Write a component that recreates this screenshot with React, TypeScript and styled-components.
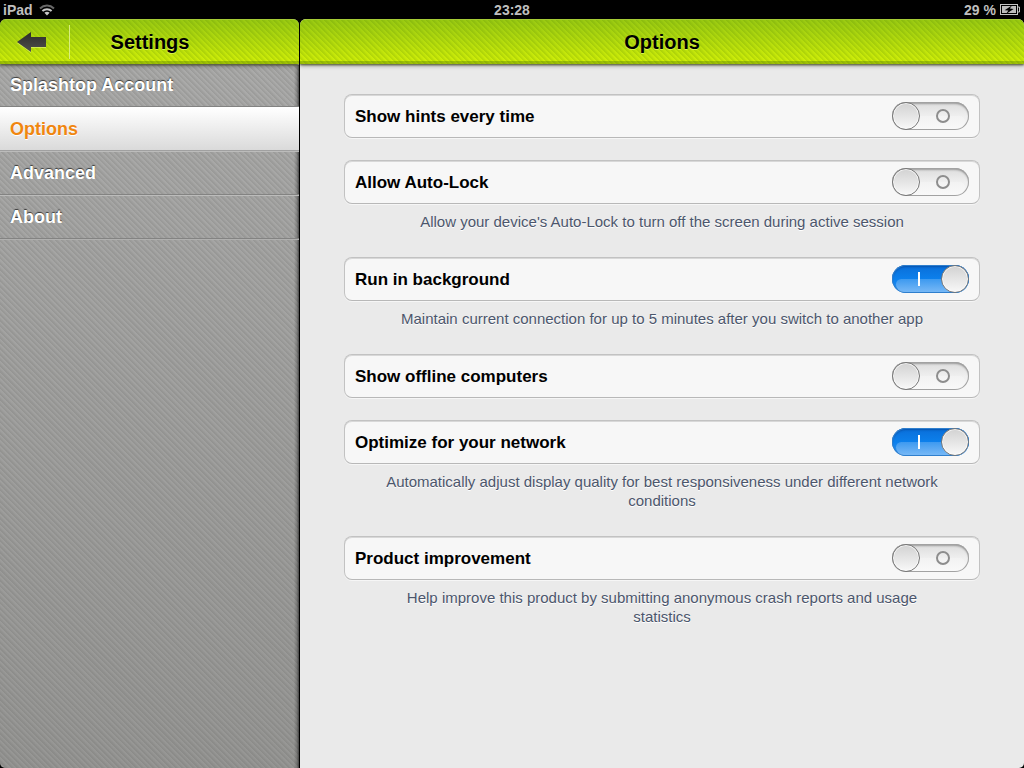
import React, { useState } from "react";
import styled, { createGlobalStyle, css } from "styled-components";

const GlobalStyle = createGlobalStyle`
  *, *::before, *::after { box-sizing: border-box; }
  body {
    margin: 0;
    background: #000;
    color: #000;
    font-family: "Liberation Sans", Helvetica, Arial, sans-serif;
  }
`;

const Screen = styled.div`
  display: flex;
  flex-direction: column;
  min-height: 100vh;
`;

const StatusBar = styled.div`
  display: grid;
  grid-template-columns: 1fr auto 1fr;
  align-items: center;
  height: 19px;
  padding: 0 3px;
  color: #bfbfbf;
  font-size: 14px;
  line-height: 18px;
  font-weight: bold;
`;

const StatusGroup = styled.div<{ $end?: boolean }>`
  display: flex;
  align-items: center;
  gap: ${(p) => (p.$end ? 4 : 6)}px;
  justify-content: ${(p) => (p.$end ? "flex-end" : "flex-start")};
`;

const SplitView = styled.div`
  display: flex;
  flex: 1;
  gap: 1px;
`;

const stripes = (color: string) =>
  css`repeating-linear-gradient(45deg, ${color} 0 1px, transparent 3px 4px)`;

const Sidebar = styled.aside`
  display: flex;
  flex-direction: column;
  flex: 0 0 299px;
  border-radius: 6px 6px 0 5px;
  overflow: hidden;
  background: ${stripes("rgba(60, 60, 56, 0.12)")}, linear-gradient(#acacab, #969694);
`;

const Content = styled.main`
  flex: 1;
  min-width: 0;
  border-radius: 6px 6px 5px 0;
  background: #eaeaea;
  overflow: hidden;
`;

const HeaderBar = styled.header`
  position: relative;
  display: flex;
  align-items: center;
  height: 45px;
  border-top: 1px solid #a5cb35;
  border-bottom: 3px solid rgba(70, 110, 0, 0.35);
  background: ${stripes("rgba(70, 120, 0, 0.16)")}, linear-gradient(#98c912, #d2f008);
  background-origin: border-box;
  box-shadow: 0 1px 2px rgba(40, 50, 0, 0.7), 0 2px 4px rgba(0, 0, 0, 0.3);
`;

const HeaderTitle = styled.h1`
  flex: 1;
  margin: 0;
  padding-top: 2px;
  text-align: center;
  font-size: 20px;
  line-height: 24px;
  font-weight: bold;
  text-shadow: 0 1px 0 rgba(235, 255, 130, 0.6);
`;

const BackButton = styled.button`
  display: flex;
  align-items: center;
  width: 70px;
  height: 34px;
  margin: 2px 0 0;
  padding: 0 0 0 17px;
  border: 0;
  border-right: 1px solid #d9ed80;
  background: none;
  cursor: pointer;
`;

const SidebarTitle = styled(HeaderTitle)`
  padding-right: 69px;
`;

const Menu = styled.nav`
  display: flex;
  flex-direction: column;
  border-bottom: 1px solid #b0b0af;
`;

const MenuLink = styled.a<{ $active?: boolean }>`
  height: 44px;
  padding: 0 10px;
  border-top: 1px solid #bcbcbb;
  border-bottom: 1px solid #838382;
  font-size: 18px;
  line-height: 42px;
  font-weight: bold;
  text-decoration: none;
  color: #fff;
  text-shadow: 0 -1px 1px rgba(0, 0, 0, 0.65);
  &:first-child {
    height: 43px;
    line-height: 40px;
  }
  ${(p) =>
    p.$active &&
    css`
      color: #f0860f;
      text-shadow: 0 1px 0 #fff;
      border-top-color: #fff;
      border-bottom-color: #a0a0a0;
      background: linear-gradient(#fff, #dadada);
    `}
`;

const SidebarBody = styled.div`
  flex: 1;
  background: linear-gradient(to left, rgba(0, 0, 0, 0.55), rgba(0, 0, 0, 0.2) 2px, transparent 5px);
`;

const OptionList = styled.div`
  padding: 30px 44px;
`;

const Option = styled.section<{ $noted: boolean }>`
  margin-bottom: ${(p) => (p.$noted ? 26 : 22)}px;
`;

const Card = styled.label`
  display: flex;
  align-items: center;
  justify-content: space-between;
  height: 44px;
  padding: 0 10px;
  border: 1px solid #c2c2c2;
  border-bottom-color: #b8b8b8;
  border-radius: 8px;
  background: #f7f7f7;
  box-shadow: inset 0 1px 0 #d8d8d8, 0 1px 0 #f6f6f6;
`;

const CardTitle = styled.span`
  padding-top: 2px;
  font-size: 17px;
  line-height: 22px;
  font-weight: bold;
`;

const Note = styled.p`
  margin: 0;
  padding: 8px 36px 0;
  text-align: center;
  font-size: 15px;
  line-height: 19px;
  color: #4c566c;
  text-shadow: 0 1px 0 #fff;
`;

const Track = styled.span<{ $on: boolean }>`
  position: relative;
  display: flex;
  align-items: center;
  flex-direction: ${(p) => (p.$on ? "row-reverse" : "row")};
  width: 77px;
  height: 28px;
  border-radius: 14px;
  overflow: hidden;
  background: ${(p) =>
    p.$on
      ? "linear-gradient(#0a6ed8, #0c80ec 50%, #2f93f2)"
      : "linear-gradient(#dcdcdc, #efefef 50%, #f6f6f6)"};
  box-shadow: ${(p) =>
    p.$on
      ? "inset 0 0 0 1px #2f7fcd, inset 0 2px 2px rgba(0, 40, 110, 0.4)"
      : "inset 0 0 0 1px #a2a2a2, inset 0 2px 2px rgba(0, 0, 0, 0.3)"};
  &::before {
    content: "";
    position: absolute;
    inset: 14px 4px 1px;
    border-radius: 8px 8px 12px 12px;
    background: linear-gradient(rgba(255, 255, 255, 0.2), rgba(255, 255, 255, 0.35));
  }
`;

const Knob = styled.span`
  position: relative;
  width: 28px;
  height: 28px;
  border: 1px solid #777;
  border-radius: 50%;
  background: linear-gradient(#d2d2d2, #f8f8f8);
  box-shadow: inset 0 0 0 1px rgba(255, 255, 255, 0.7);
`;

const MarkSlot = styled.span`
  position: relative;
  display: flex;
  flex: 1;
  justify-content: center;
`;

const OffMark = styled.span`
  width: 14px;
  height: 14px;
  margin-right: 4px;
  border: 2px solid #8d8d8d;
  border-radius: 50%;
`;

const OnMark = styled.span`
  width: 2px;
  height: 14px;
  margin-left: 5px;
  background: #fff;
`;

const SwitchInput = styled.input`
  position: absolute;
  inset: 0;
  width: 100%;
  height: 100%;
  margin: 0;
  opacity: 0;
  cursor: pointer;
`;

type OptionData = { title: string; note?: string; on: boolean };

const options: OptionData[] = [
  { title: "Show hints every time", on: false },
  {
    title: "Allow Auto-Lock",
    note: "Allow your device's Auto-Lock to turn off the screen during active session",
    on: false,
  },
  {
    title: "Run in background",
    note: "Maintain current connection for up to 5 minutes after you switch to another app",
    on: true,
  },
  { title: "Show offline computers", on: false },
  {
    title: "Optimize for your network",
    note: "Automatically adjust display quality for best responsiveness under different network conditions",
    on: true,
  },
  {
    title: "Product improvement",
    note: "Help improve this product by submitting anonymous crash reports and usage statistics",
    on: false,
  },
];

const menu = ["Splashtop Account", "Options", "Advanced", "About"];

function WifiIcon() {
  return (
    <svg width="16" height="12" viewBox="0 0 16 12" fill="none" aria-hidden="true">
      <path d="M1 4.4C5 .6 11 .6 15 4.4" stroke="#686868" strokeWidth="2" />
      <path d="M3.4 7C6 4.6 10 4.6 12.6 7" stroke="#c8c8c8" strokeWidth="2" />
      <path d="M5.4 8.7Q8 6.7 10.6 8.7L8 11.6Z" fill="#c8c8c8" />
    </svg>
  );
}

function BatteryIcon() {
  return (
    <svg width="21" height="11" viewBox="0 0 21 11" aria-hidden="true">
      <rect x=".5" y=".5" width="17" height="10" fill="none" stroke="#c4c4c4" />
      <rect x="2" y="2" width="14" height="7" fill="#bdbdbd" />
      <path d="M18 3h1.5v5H18" fill="none" stroke="#c4c4c4" />
      <path d="M12.2 1.2 4.6 6.2 8.4 6.6 6 10 13.6 5 9.8 4.5Z" fill="#000" />
    </svg>
  );
}

function BackArrow() {
  return (
    <svg width="30" height="22" viewBox="0 0 30 22" aria-hidden="true">
      <defs>
        <linearGradient id="arrowFill" x1="0" y1="0" x2="0" y2="1">
          <stop offset="0" stopColor="#2c2c2a" />
          <stop offset="1" stopColor="#50504c" />
        </linearGradient>
      </defs>
      <path d="M0 12 14 2V7H29V17H14V22Z" fill="#e0f56a" opacity=".7" />
      <path d="M0 11 14 1V6H29V16H14V21Z" fill="url(#arrowFill)" />
    </svg>
  );
}

function OptionRow({ title, note, on }: OptionData) {
  const [checked, setChecked] = useState(on);
  return (
    <Option $noted={Boolean(note)}>
      <Card>
        <CardTitle>{title}</CardTitle>
        <Track $on={checked}>
          <Knob />
          <MarkSlot>{checked ? <OnMark /> : <OffMark />}</MarkSlot>
          <SwitchInput
            type="checkbox"
            checked={checked}
            onChange={(e) => setChecked(e.target.checked)}
          />
        </Track>
      </Card>
      {note && <Note>{note}</Note>}
    </Option>
  );
}

export default function App() {
  const [active, setActive] = useState("Options");
  return (
    <Screen>
      <GlobalStyle />
      <StatusBar>
        <StatusGroup>
          <span>iPad</span>
          <WifiIcon />
        </StatusGroup>
        <span>23:28</span>
        <StatusGroup $end>
          <span>29 %</span>
          <BatteryIcon />
        </StatusGroup>
      </StatusBar>
      <SplitView>
        <Sidebar>
          <HeaderBar>
            <BackButton type="button" aria-label="Back">
              <BackArrow />
            </BackButton>
            <SidebarTitle>Settings</SidebarTitle>
          </HeaderBar>
          <SidebarBody>
            <Menu>
              {menu.map((name) => (
                <MenuLink
                  key={name}
                  href="#"
                  $active={name === active}
                  onClick={(e) => {
                    e.preventDefault();
                    setActive(name);
                  }}
                >
                  {name}
                </MenuLink>
              ))}
            </Menu>
          </SidebarBody>
        </Sidebar>
        <Content>
          <HeaderBar>
            <HeaderTitle as="h2">Options</HeaderTitle>
          </HeaderBar>
          <OptionList>
            {options.map((o) => (
              <OptionRow key={o.title} {...o} />
            ))}
          </OptionList>
        </Content>
      </SplitView>
    </Screen>
  );
}
